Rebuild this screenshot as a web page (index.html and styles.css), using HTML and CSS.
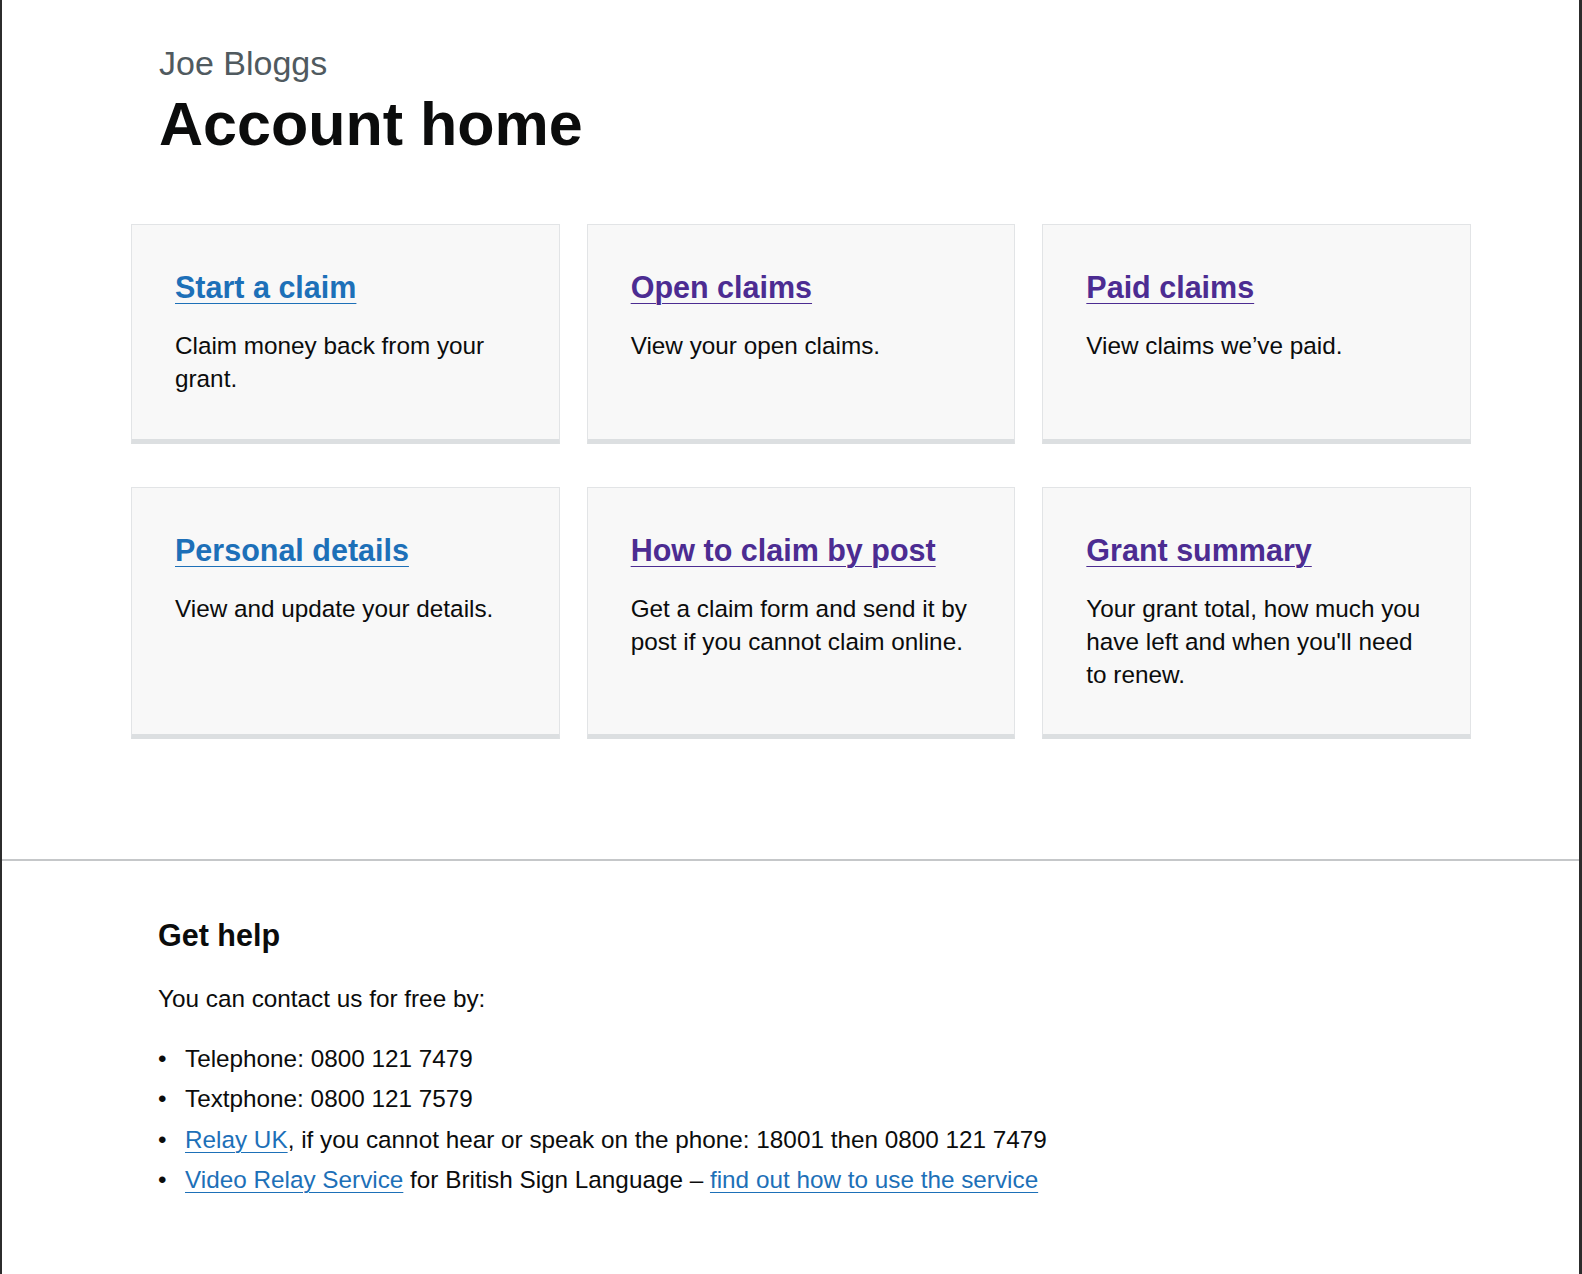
FILE: index.html
```html
<!DOCTYPE html>
<html lang="en">
<head>
<meta charset="utf-8">
<title>Account home</title>
<link rel="stylesheet" href="styles.css">
</head>
<body>
<div class="page">
  <main class="main">
    <span class="caption">Joe Bloggs</span>
    <h1 class="title">Account home</h1>
    <div class="cards">
      <div class="card">
        <h2 class="card-title"><a class="link" href="#">Start a claim</a></h2>
        <p class="card-desc">Claim money back from your grant.</p>
      </div>
      <div class="card">
        <h2 class="card-title"><a class="link visited" href="#">Open claims</a></h2>
        <p class="card-desc">View your open claims.</p>
      </div>
      <div class="card">
        <h2 class="card-title"><a class="link visited" href="#">Paid claims</a></h2>
        <p class="card-desc">View claims we’ve paid.</p>
      </div>
      <div class="card">
        <h2 class="card-title"><a class="link" href="#">Personal details</a></h2>
        <p class="card-desc">View and update your details.</p>
      </div>
      <div class="card">
        <h2 class="card-title"><a class="link visited" href="#">How to claim by post</a></h2>
        <p class="card-desc">Get a claim form and send it by post if you cannot claim online.</p>
      </div>
      <div class="card">
        <h2 class="card-title"><a class="link visited" href="#">Grant summary</a></h2>
        <p class="card-desc">Your grant total, how much you have left and when you'll need to renew.</p>
      </div>
    </div>
  </main>
  <footer class="footer">
    <h2 class="footer-title">Get help</h2>
    <p class="footer-text">You can contact us for free by:</p>
    <ul class="footer-list">
      <li>Telephone: 0800 121 7479</li>
      <li>Textphone: 0800 121 7579</li>
      <li><a class="link" href="#">Relay UK</a>, if you cannot hear or speak on the phone: 18001 then 0800 121 7479</li>
      <li><a class="link" href="#">Video Relay Service</a> for British Sign Language – <a class="link" href="#">find out how to use the service</a></li>
    </ul>
  </footer>
</div>
</body>
</html>
```
FILE: styles.css
```css
html, body {
  margin: 0;
  padding: 0;
  background: #ffffff;
}

body {
  font-family: "Liberation Sans", Arial, sans-serif;
  color: #0b0c0c;
}

.page {
  box-sizing: border-box;
  min-height: 100vh;
  border-left: 2px solid #2c2c2c;
  border-right: 3px solid #2c2c2c;
}

.main {
  margin-left: 129px;
  width: 1340px;
  padding-top: 43px;
  padding-bottom: 120px;
}

.caption {
  display: block;
  padding-left: 28px;
  margin: 0 0 8px;
  font-size: 34px;
  line-height: 40px;
  color: #505a5f;
}

.title {
  padding-left: 28px;
  margin: 0 0 67px;
  font-size: 61px;
  line-height: 66px;
  font-weight: 700;
}

.cards {
  display: grid;
  grid-template-columns: repeat(3, 1fr);
  column-gap: 27px;
  row-gap: 43px;
}

.card {
  background: #f8f8f8;
  border: 1px solid #e2e4e6;
  border-bottom: 5px solid #dcdfe1;
  padding: 42px 40px 43px 43px;
}

.card-title {
  margin: 0 0 22px;
  font-size: 30.5px;
  line-height: 40px;
  font-weight: 700;
}

.card-desc {
  margin: 0;
  font-size: 24.3px;
  line-height: 33.3px;
}

.link {
  color: #1d70b8;
  text-decoration: underline;
  text-decoration-thickness: 1px;
  text-underline-offset: 0.16em;
}

.link.visited {
  color: #4c2c92;
}

.footer {
  border-top: 2px solid #c5c7c9;
  padding: 54px 0 60px 156px;
}

.footer-title {
  margin: 0 0 27px;
  font-size: 30.5px;
  line-height: 40px;
  font-weight: 700;
}

.footer-text {
  margin: 0 0 26px;
  font-size: 24.3px;
  line-height: 33.3px;
}

.footer-list {
  margin: 0;
  padding: 0;
  list-style: none;
}

.footer-list li {
  padding-left: 27px;
  margin-bottom: 7.1px;
  font-size: 24.3px;
  line-height: 33.3px;
}

.footer-list li::before {
  content: "•";
  display: inline-block;
  width: 27px;
  margin-left: -27px;
}
```
